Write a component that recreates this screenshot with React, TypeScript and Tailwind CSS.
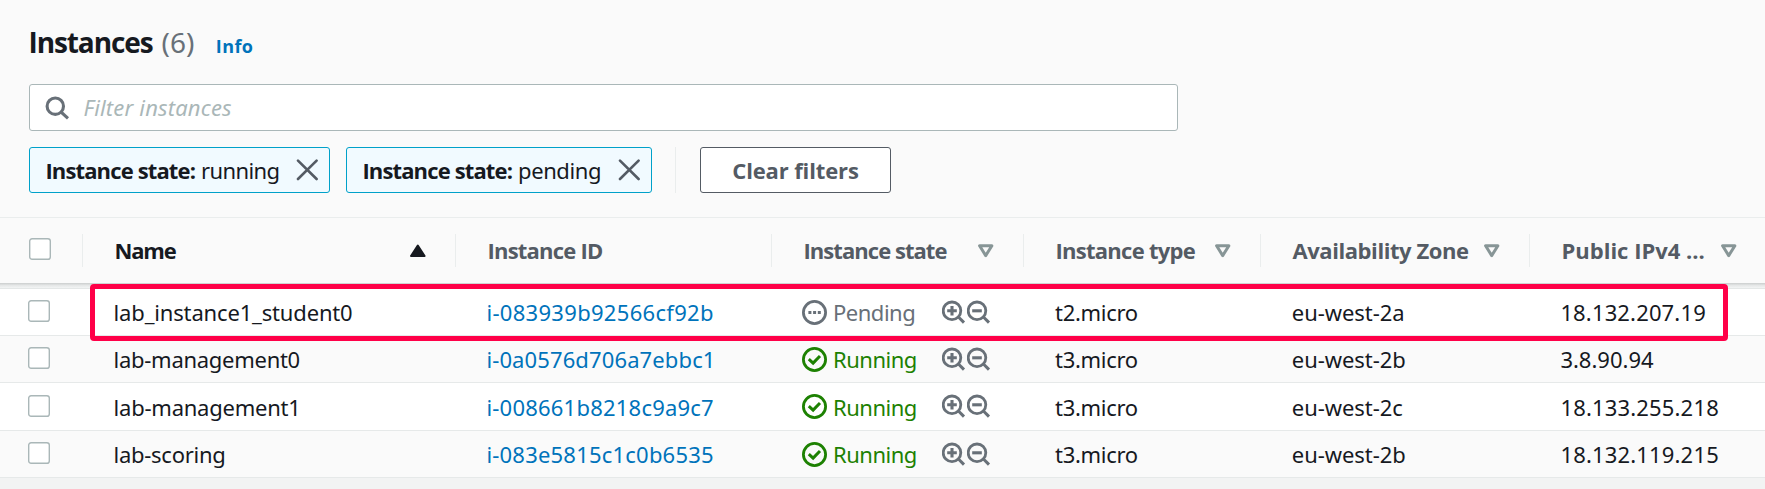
import type { ReactNode } from "react";

type Instance = {
  name: string;
  nameClass: string;
  id: string;
  idClass: string;
  state: "Pending" | "Running";
  type: string;
  zone: string;
  ip: string;
  ipClass: string;
  height: string;
};

const instances: Instance[] = [
  { name: "lab_instance1_student0", nameClass: "tracking-[-0.16px]", id: "i-083939b92566cf92b", idClass: "tracking-[0.31px]", state: "Pending", type: "t2.micro", zone: "eu-west-2a", ip: "18.132.207.19", ipClass: "tracking-[0.15px]", height: "h-[47px]" },
  { name: "lab-management0", nameClass: "tracking-[-0.28px]", id: "i-0a0576d706a7ebbc1", idClass: "tracking-[0.12px]", state: "Running", type: "t3.micro", zone: "eu-west-2b", ip: "3.8.90.94", ipClass: "tracking-[0px]", height: "h-[47px]" },
  { name: "lab-management1", nameClass: "tracking-[-0.23px]", id: "i-008661b8218c9a9c7", idClass: "tracking-[0.22px]", state: "Running", type: "t3.micro", zone: "eu-west-2c", ip: "18.133.255.218", ipClass: "tracking-[0.17px]", height: "h-[48px]" },
  { name: "lab-scoring", nameClass: "tracking-[-0.28px]", id: "i-083e5815c1c0b6535", idClass: "tracking-[0.21px]", state: "Running", type: "t3.micro", zone: "eu-west-2b", ip: "18.132.119.215", ipClass: "tracking-[0.17px]", height: "h-[47px]" },
];

const columns = "grid grid-cols-[83px_373px_316px_252px_237px_269px_1fr]";
const strong = "font-['Open_Sans',sans-serif] font-bold";

function Checkbox() {
  return (
    <svg className="block" width="22" height="22" viewBox="0 0 22 22">
      <rect x="0.7" y="0.7" width="20.6" height="20.6" rx="2.4" fill="#fff" stroke="#aab7b8" strokeWidth="1.4" />
    </svg>
  );
}

function SearchIcon() {
  return (
    <svg width="24" height="24" viewBox="0 0 24 24" fill="none" stroke="#687078" strokeWidth="3.1">
      <circle cx="10.3" cy="10.2" r="8.2" />
      <path d="M16 16 L23 22.4" />
    </svg>
  );
}

function CloseIcon() {
  return (
    <svg width="22" height="22" viewBox="0 0 22 22" fill="none" stroke="#545b64" strokeWidth="2.6" strokeLinecap="round">
      <path d="M2 1.6 L20.6 20 M20.6 1.6 L2 20" />
    </svg>
  );
}

function SortDown() {
  return (
    <svg width="16" height="14" viewBox="0 0 16 14" fill="none" stroke="#879596" strokeWidth="3" strokeLinejoin="round">
      <path d="M1.6 1.8 H13.9 L7.7 11.6 Z" />
    </svg>
  );
}

function SortUp() {
  return (
    <svg width="16" height="14" viewBox="0 0 16 14" fill="#16191f" stroke="#16191f" strokeWidth="2" strokeLinejoin="round">
      <path d="M1 12 H14.6 L7.8 1.5 Z" />
    </svg>
  );
}

function StatusIcon({ state }: { state: Instance["state"] }) {
  if (state === "Pending") {
    return (
      <svg width="25" height="25" viewBox="0 0 25 25" fill="none" stroke="#687078" strokeWidth="2.8">
        <circle cx="12.5" cy="12.5" r="11.1" />
        <path d="M6.4 12.5 H18.8" strokeWidth="3" strokeDasharray="3 1.7" />
      </svg>
    );
  }
  return (
    <svg width="25" height="25" viewBox="0 0 25 25" fill="none" stroke="#1d8102" strokeWidth="2.8">
      <circle cx="12.5" cy="12.5" r="11.1" />
      <path d="M6.8 12.1 L11.1 16.1 L18 9" strokeWidth="3" />
    </svg>
  );
}

function Magnifier({ plus }: { plus?: boolean }) {
  return (
    <svg width="25" height="25" viewBox="0 0 25 25" fill="none" stroke="#687078" strokeWidth="2.8">
      <circle cx="10" cy="11.8" r="8.8" />
      <path d="M16.2 17.8 L22 23.6" strokeWidth="3" />
      <path d={plus ? "M5.2 11.8 H14.8 M10 7 V16.6" : "M5.2 11.8 H14.8"} strokeWidth="3.1" />
    </svg>
  );
}

function HeaderCell({ label, className, icon, iconMargin = "mr-[30px]" }: { label: string; className: string; icon?: ReactNode; iconMargin?: string }) {
  return (
    <div className="-ml-px flex h-[33px] items-center border-l border-[#eaeded] pl-[31.5px]">
      <span className={`-mt-[2px] whitespace-pre ${strong} ${className}`}>{label}</span>
      {icon && <span className={`ml-auto ${iconMargin}`}>{icon}</span>}
    </div>
  );
}

function Token({ value, width, tracking }: { value: string; width: string; tracking: string }) {
  return (
    <div className={`flex h-[46px] items-center justify-between rounded-[3px] border border-[#00a1c9] bg-[#f1faff] pl-[15.4px] pr-[11px] ${width}`}>
      <span className="flex whitespace-pre">
        <span className={`${strong} tracking-[-0.86px]`}>Instance state:</span>
        <span className={`ml-[6px] ${tracking}`}>{value}</span>
      </span>
      <CloseIcon />
    </div>
  );
}

export default function App() {
  return (
    <div className="relative h-[489px] w-[1765px] overflow-hidden bg-[#f2f3f3] font-['Noto_Sans',sans-serif] text-[22px] leading-[30px] text-[#16191f]">
      <header className="h-[217px] bg-[#fafafa] pl-[29px] pt-[23px]">
        <div className="flex h-[38px] items-baseline text-[28px] leading-[38px]">
          <h1 className={`${strong} -ml-[0.5px] tracking-[-1.1px]`}>Instances</h1>
          <span className="ml-[9px] text-[#687078]">(6)</span>
          <a className={`ml-[21.5px] text-[18px] leading-[24px] tracking-[0.4px] text-[#0073bb] ${strong}`}>Info</a>
        </div>
        <div className="mt-[23px] flex h-[47px] w-[1149px] items-center rounded-[3px] border border-[#aab7b8] bg-white pl-[15px]">
          <SearchIcon />
          <span className="-mt-[2px] ml-[14.5px] tracking-[0.17px] italic text-[#aab7b8]">Filter instances</span>
        </div>
        <div className="mt-4 flex">
          <Token value="running" width="w-[301px]" tracking="tracking-[-0.64px]" />
          <Token value="pending" width="ml-4 w-[306px]" tracking="tracking-[-0.42px]" />
          <div className="ml-[23px] h-[46px] border-l border-[#eaeded]" />
          <button className={`ml-6 h-[46px] w-[191px] rounded-[3px] border border-[#545b64] bg-white tracking-[-0.13px] text-[#545b64] ${strong}`}>Clear filters</button>
        </div>
      </header>

      <div className={`${columns} h-[66px] items-center border-t border-[#eaeded] bg-[#fafafa] text-[#545b64]`}>
        <div className="-mt-[3px] pl-[29px]"><Checkbox /></div>
        <HeaderCell label="Name" className="tracking-[-1.2px] text-[#16191f]" icon={<SortUp />} />
        <HeaderCell label="Instance ID" className="tracking-[-0.78px]" />
        <HeaderCell label="Instance state" className="tracking-[-0.95px]" icon={<SortDown />} />
        <HeaderCell label="Instance type" className="tracking-[-0.73px]" icon={<SortDown />} />
        <HeaderCell label="Availability Zone" className="tracking-[-0.43px]" icon={<SortDown />} />
        <HeaderCell label="Public IPv4 ..." className="tracking-[0px]" icon={<SortDown />} iconMargin="mr-[28px]" />
      </div>

      <div className="h-[6px] border-b border-[#e4e7e7] bg-linear-to-b from-[#cbcece] via-[#e6e8e8] to-[#f2f4f4]" />

      {instances.map((row) => (
        <div key={row.id} className={`${columns} ${row.height} items-center border-b border-[#e6e9e9] odd:bg-[#fafafa] even:bg-white`}>
          <div className="-mt-[2px] pl-[28px]"><Checkbox /></div>
          <span className={`pl-[30.6px] ${row.nameClass}`}>{row.name}</span>
          <a className={`pl-[30.4px] text-[#0073bb] ${row.idClass}`}>{row.id}</a>
          <div className={`flex items-center pl-[30px] ${row.state === "Pending" ? "text-[#687078]" : "text-[#1d8102]"}`}>
            <StatusIcon state={row.state} />
            <span className="ml-[6px] w-[109px] tracking-[-0.48px]">{row.state}</span>
            <span className="-mt-[2px] flex">
              <Magnifier plus />
              <Magnifier />
            </span>
          </div>
          <span className="pl-[31px] tracking-[-0.3px]">{row.type}</span>
          <span className="pl-[30.8px] tracking-[-0.06px]">{row.zone}</span>
          <span className={`pl-[30.4px] ${row.ipClass}`}>{row.ip}</span>
        </div>
      ))}

      <div className="absolute left-[90px] top-[283.5px] h-[57px] w-[1638px] rounded-[4px] border-[5px] border-[#ff0048]" />
    </div>
  );
}
